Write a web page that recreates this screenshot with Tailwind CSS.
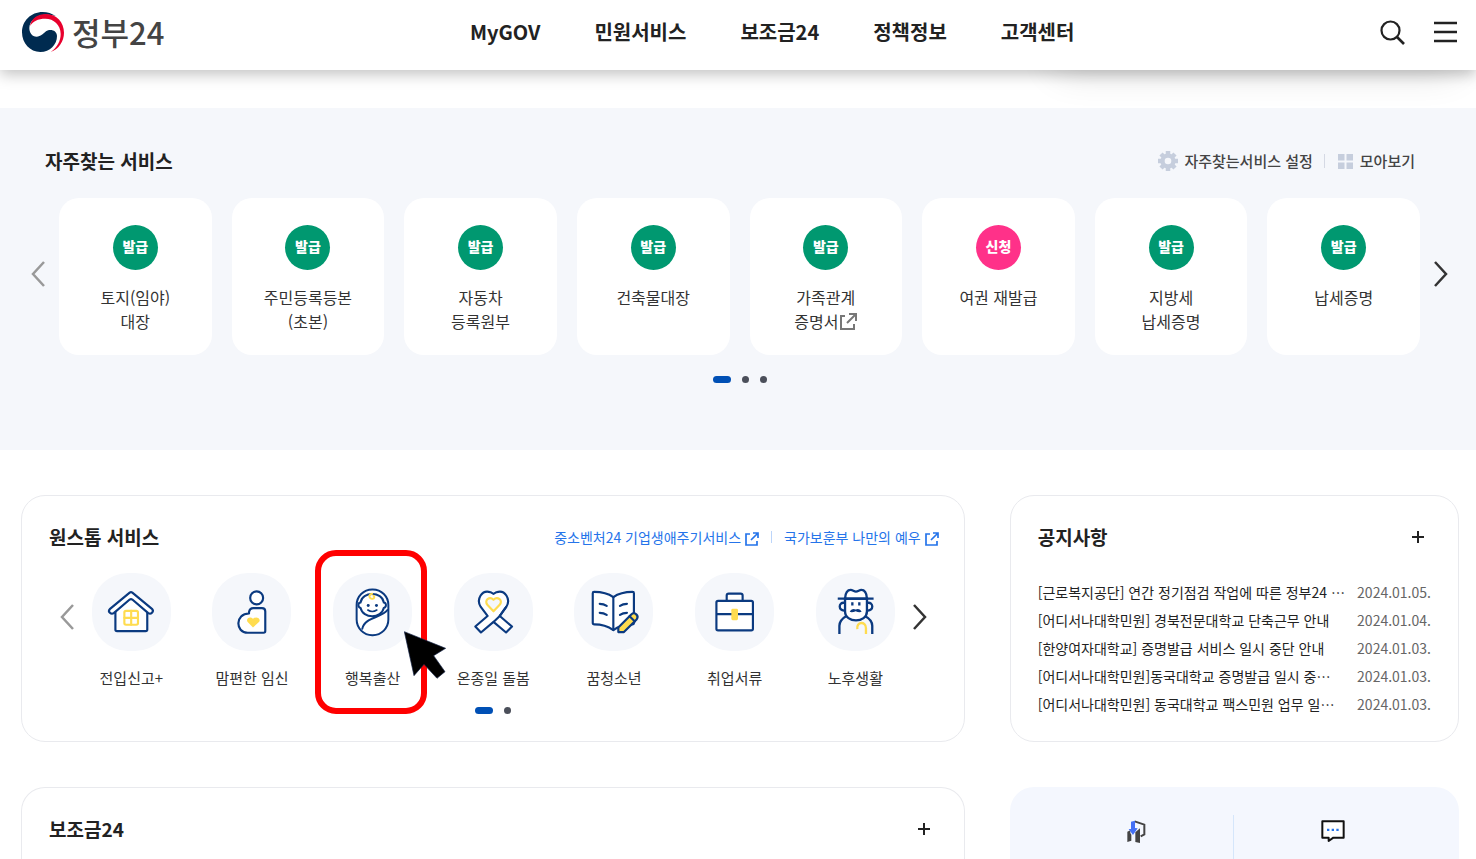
<!DOCTYPE html>
<html lang="ko">
<head>
<meta charset="utf-8">
<meta name="viewport" content="width=device-width, initial-scale=1">
<title>정부24</title>
<script src="https://cdn.jsdelivr.net/npm/@tailwindcss/browser@4"></script>
</head>
<body class="flex h-screen flex-col overflow-hidden bg-white font-['Noto_Sans_CJK_KR',sans-serif] text-[#333]">

<header class="relative z-10 flex h-[70px] shrink-0 items-center justify-between bg-white pr-[19px] pb-[6px] pl-[22px] shadow-[0_4px_14px_rgba(0,0,0,0.25)]">
  <a href="#" class="flex items-center gap-[8px]">
    <svg class="h-[40px] w-[42px]" viewBox="66 36 126 120" aria-hidden="true">
      <path fill="#002b50" d="M168 49C156 40 142 36 128 36C93 36 66 63 66 97C66 130 90 156 121 156C150 156 171 134 171 108C171 90 150 85 138 94C130 101 122 110 110 110C96 110 88 98 88 84C88 62 110 44 136 44C148 44 158 45 168 49Z"/>
      <path fill="#e8002d" d="M90 78C94 54 114 42 138 42C170 42 192 68 192 98C192 125 175 148 152 156C172 142 182 122 182 102C182 74 161 56 136 56C114 56 98 64 90 78Z"/>
    </svg>
    <span class="text-[31px] leading-[40px] font-medium text-[#444]">정부24</span>
  </a>
  <nav class="flex gap-[54px] text-[20px] leading-[28px] font-bold text-[#222]">
    <a href="#">MyGOV</a>
    <a href="#">민원서비스</a>
    <a href="#">보조금24</a>
    <a href="#">정책정보</a>
    <a href="#">고객센터</a>
  </nav>
  <div class="flex items-center gap-[29px]">
    <button aria-label="검색"><svg class="block size-[25px]" viewBox="0 0 25 25" fill="none" stroke="#222" stroke-width="2.200"><circle cx="10.500" cy="10.500" r="9"/><path d="M17 17l7 7" stroke-width="2.600"/></svg></button>
    <button aria-label="전체메뉴"><svg class="block h-[22px] w-[23px]" viewBox="0 0 23 22" stroke="#222" stroke-width="2.300"><path d="M0 2h23M0 11h23M0 20h23"/></svg></button>
  </div>
</header>

<div class="relative h-[38px] shrink-0 overflow-hidden" aria-hidden="true">
  <div class="absolute right-[14px] bottom-full h-10 w-[410px] rounded-3xl shadow-[0_4px_36px_rgba(0,0,0,0.12)]"></div>
</div>

<section class="h-[342px] shrink-0 bg-[#f5f7fb] pt-[39px]">
  <div class="flex items-center justify-between pr-[61px] pl-[45px]">
    <h2 class="text-[19px] leading-[28px] font-bold text-[#222]">자주찾는 서비스</h2>
    <div class="flex items-center text-[15px] leading-[28px] font-medium text-[#444]">
      <a href="#" class="flex items-center gap-[6px]">
        <svg class="size-5" viewBox="0 0 20 20" aria-hidden="true"><g stroke="#c6cedd" stroke-width="4.500"><path d="M10 0v20M0 10h20M3 3l14 14M17 3L3 17"/></g><circle cx="10" cy="10" r="7.600" fill="#c6cedd"/><circle cx="10" cy="10" r="3.300" fill="#f5f7fb"/></svg>
        자주찾는서비스 설정
      </a>
      <span class="mx-[11px] h-[14px] w-px bg-[#d5d9e4]"></span>
      <a href="#" class="flex items-center gap-[7px]">
        <svg class="ml-[2px] size-[15px]" viewBox="0 0 15 15" fill="#c6cedd" aria-hidden="true"><path d="M0 0h6.500v6.500H0zM8.500 0H15v6.500H8.500zM0 8.500h6.500V15H0zM8.500 8.500H15V15H8.500z"/></svg>
        모아보기
      </a>
    </div>
  </div>
  <div class="mt-[23px] flex items-center gap-[14px] pr-[28px] pl-[31px]">
    <button aria-label="이전" class="-mt-[6px]"><svg class="block h-[26px] w-[14px]" viewBox="0 0 14 26" fill="none" stroke="#999" stroke-width="2.500"><path d="M13 1L2 13l11 12"/></svg></button>
    <ul class="grid flex-1 grid-cols-8 gap-5 text-center text-[16px] leading-[24px]">
      <li><a href="#" class="flex h-[157px] flex-col items-center gap-[15px] rounded-[20px] bg-white pt-[27px]"><span class="size-[45px] rounded-full bg-[#009870] text-[14px] leading-[43px] font-black text-white">발급</span><span>토지(임야)<br>대장</span></a></li>
      <li><a href="#" class="flex h-[157px] flex-col items-center gap-[15px] rounded-[20px] bg-white pt-[27px]"><span class="size-[45px] rounded-full bg-[#009870] text-[14px] leading-[43px] font-black text-white">발급</span><span>주민등록등본<br>(초본)</span></a></li>
      <li><a href="#" class="flex h-[157px] flex-col items-center gap-[15px] rounded-[20px] bg-white pt-[27px]"><span class="size-[45px] rounded-full bg-[#009870] text-[14px] leading-[43px] font-black text-white">발급</span><span>자동차<br>등록원부</span></a></li>
      <li><a href="#" class="flex h-[157px] flex-col items-center gap-[15px] rounded-[20px] bg-white pt-[27px]"><span class="size-[45px] rounded-full bg-[#009870] text-[14px] leading-[43px] font-black text-white">발급</span><span>건축물대장</span></a></li>
      <li><a href="#" class="flex h-[157px] flex-col items-center gap-[15px] rounded-[20px] bg-white pt-[27px]"><span class="size-[45px] rounded-full bg-[#009870] text-[14px] leading-[43px] font-black text-white">발급</span><span>가족관계<br><span class="flex items-center justify-center gap-[2px]">증명서<svg class="size-[17px]" viewBox="0 0 17 17" fill="none" stroke="#777" stroke-width="2" aria-hidden="true"><path d="M5 3H1v13h13v-5M9 1h7v7M16 1L7 10"/></svg></span></span></a></li>
      <li><a href="#" class="flex h-[157px] flex-col items-center gap-[15px] rounded-[20px] bg-white pt-[27px]"><span class="size-[45px] rounded-full bg-[#ff3189] text-[14px] leading-[43px] font-black text-white">신청</span><span>여권 재발급</span></a></li>
      <li><a href="#" class="flex h-[157px] flex-col items-center gap-[15px] rounded-[20px] bg-white pt-[27px]"><span class="size-[45px] rounded-full bg-[#009870] text-[14px] leading-[43px] font-black text-white">발급</span><span>지방세<br>납세증명</span></a></li>
      <li><a href="#" class="flex h-[157px] flex-col items-center gap-[15px] rounded-[20px] bg-white pt-[27px]"><span class="size-[45px] rounded-full bg-[#009870] text-[14px] leading-[43px] font-black text-white">발급</span><span>납세증명</span></a></li>
    </ul>
    <button aria-label="다음" class="-mt-[6px]"><svg class="block h-[26px] w-[14px]" viewBox="0 0 14 26" fill="none" stroke="#333" stroke-width="2.500"><path d="M1 1l11 12L1 25"/></svg></button>
  </div>
  <div class="mt-[21px] flex items-center justify-center gap-[11px] pl-1">
    <button aria-label="1" class="h-[7px] w-[18px] rounded-full bg-[#0050b5]"></button>
    <button aria-label="2" class="size-[7px] rounded-full bg-[#4b4f5a]"></button>
    <button aria-label="3" class="size-[7px] rounded-full bg-[#4b4f5a]"></button>
  </div>
</section>

<main class="grid flex-1 grid-cols-[943fr_449fr] grid-rows-[247px_1fr] gap-[45px] pt-[45px] pr-[17px] pl-[21px]">
  <section class="rounded-[24px] border border-[#e9eaee] pt-[27px]">
    <div class="flex items-center justify-between pr-[25px] pl-[27px]">
      <h2 class="text-[19px] leading-[28px] font-bold text-[#222]">원스톱 서비스</h2>
      <div class="flex items-center gap-[12px] text-[14px] leading-[28px] text-[#2574ea]">
        <a href="#" class="flex items-center gap-[4px]">중소벤처24 기업생애주기서비스<svg class="mt-[3px] size-[14px]" viewBox="0 0 14 14" fill="none" stroke="#2574ea" stroke-width="1.700" aria-hidden="true"><path d="M5 2H1v11h11V9M8 1h5v5M13 1L6 8"/></svg></a>
        <span class="h-3 w-px bg-[#bcd5fa]"></span>
        <a href="#" class="flex items-center gap-[4px]">국가보훈부 나만의 예우<svg class="mt-[3px] size-[14px]" viewBox="0 0 14 14" fill="none" stroke="#2574ea" stroke-width="1.700" aria-hidden="true"><path d="M5 2H1v11h11V9M8 1h5v5M13 1L6 8"/></svg></a>
      </div>
    </div>
    <div class="mt-[22px] flex items-start pr-[37px] pl-[38px]">
      <button aria-label="이전" class="mt-[31px]"><svg class="block h-[26px] w-[14px]" viewBox="0 0 14 26" fill="none" stroke="#999" stroke-width="2.500"><path d="M13 1L2 13l11 12"/></svg></button>
      <ul class="-mx-[3px] grid flex-1 grid-cols-7 text-center text-[15px] leading-[22px]">
        <li><a href="#" class="flex flex-col items-center gap-4">
          <svg class="h-[78px] w-[79px] rounded-[36px] bg-[#f5f7fb]" viewBox="36 41 237 235" fill="none" stroke="#0b3a80" stroke-width="6.500" stroke-linejoin="round" stroke-linecap="round" aria-hidden="true"><path fill="#fff" d="M106 152V211q0 5 5 5h86q5 0 5-5V152L153 114Z"/><path fill="#fff" d="M89 150L149 100q4-3 8 0L217 150c6 8-4 17-12 12L157 121q-4-3-8 0L101 162c-8 5-19-4-12-12Z"/><g stroke="#ffdc4f"><rect x="133" y="155" width="41" height="42" rx="5"/><path d="M153.500 155v42M133 176h41"/></g></svg>
          전입신고+</a></li>
        <li><a href="#" class="flex flex-col items-center gap-4">
          <svg class="h-[78px] w-[79px] rounded-[36px] bg-[#f5f7fb]" viewBox="398 41 237 235" fill="none" stroke="#0b3a80" stroke-width="6.500" stroke-linejoin="round" aria-hidden="true"><circle cx="532" cy="116" r="19.500" fill="#fff"/><path fill="#fff" d="M509 163V159q2-12 13-12h26q10 0 10 10v59q0 5-5 5h-48c-38 0-38-58 4-58Z"/><path fill="#ffdc4f" stroke="none" d="M521 205l-16-16c-7-9 6-20 16-10c10-10 26 1 18 10Z"/></svg>
          맘편한 임신</a></li>
        <li class="relative"><a href="#" class="flex flex-col items-center gap-4">
          <svg class="h-[78px] w-[79px] rounded-[36px] bg-[#f5f7fb]" viewBox="100 101 236 236" fill="none" stroke="#0b3a80" stroke-width="6" stroke-linecap="round" aria-hidden="true"><rect x="170" y="151" width="96" height="138" rx="47" fill="#fff"/><path fill="#fff" d="M182 190C186 156 248 156 252 190c9 1 9 15 0 17C245 240 189 240 182 207c-9-2-9-16 0-17Z"/><path d="M263 213C248 236 194 234 187 270"/><g fill="#0b3a80" stroke="none"><circle cx="205" cy="199" r="4.500"/><circle cx="230" cy="199" r="4.500"/></g><path d="M204 213q13 9 27 0" stroke-width="5"/><path stroke="#ffdc4f" d="M217 164c-13 1-9 17 1 15c6-1 7-7 3-9"/></svg>
          행복출산</a>
          <span class="pointer-events-none absolute top-[-23px] right-[6px] left-[3px] h-[164px] rounded-[21px] border-6 border-[#f00]"></span>
          <svg class="pointer-events-none absolute top-[58px] left-[92px] z-10 h-[48px] w-[43px]" viewBox="312 275 129 144" aria-hidden="true"><path d="M313 277L437 327L401 349L435 397L411 417L372 375L342 409Z" fill="#000" stroke="#16264a" stroke-width="2"/></svg>
        </li>
        <li><a href="#" class="flex flex-col items-center gap-4">
          <svg class="h-[78px] w-[79px] rounded-[36px] bg-[#f5f7fb]" viewBox="461 101 236 236" fill="none" stroke="#0b3a80" stroke-width="6.500" stroke-linejoin="round" aria-hidden="true"><path fill="#fff" d="M618 203C632 180 614 150 588 159L579 164L570 159C544 150 526 180 540 203L561 231L524 263L541 281L579 249L617 281L635 263L598 231Z"/><path d="M579 249L598 231L618 203"/><path stroke="#ffdc4f" fill="#f5f7fb" d="M579 217L561 198c-12-14 6-28 18-16c12-12 31 2 18 16Z"/></svg>
          온종일 돌봄</a></li>
        <li><a href="#" class="flex flex-col items-center gap-4">
          <svg class="h-[78px] w-[79px] rounded-[36px] bg-[#f5f7fb]" viewBox="42 41 237 235" fill="none" stroke="#0b3a80" stroke-width="6.500" stroke-linejoin="round" stroke-linecap="round" aria-hidden="true"><path fill="#fff" d="M160 114C145 103 126 98 102 98q-4 0-4 4v89q0 5 5 5c24 0 41 6 57 17c15-11 36-16 57-17q5 0 5-5V102q0-4-4-4c-24 0-43 5-58 16Z"/><path d="M160 114v98"/><path d="M119 134q12 0 21 6M119 161q12 0 21 6M201 134q-12 0-21 6M201 161q-12 0-21 6"/><path fill="#ffdc4f" d="M175 205L214 166c10-10 25 4 16 15L192 219H175Z"/><path d="M209 171l16 16"/></svg>
          꿈청소년</a></li>
        <li><a href="#" class="flex flex-col items-center gap-4">
          <svg class="h-[78px] w-[79px] rounded-[36px] bg-[#f5f7fb]" viewBox="404 41 237 235" fill="none" stroke="#0b3a80" stroke-width="6.500" stroke-linejoin="round" aria-hidden="true"><path fill="#fff" d="M499 124V109q0-6 6-6h36q6 0 6 6v15"/><rect x="468" y="125" width="110" height="89" rx="5" fill="#fff"/><path d="M468 165h110"/><rect x="513" y="149" width="20" height="34" rx="4" fill="#ffdc4f" stroke="none"/></svg>
          취업서류</a></li>
        <li><a href="#" class="flex flex-col items-center gap-4">
          <svg class="h-[78px] w-[79px] rounded-[36px] bg-[#f5f7fb]" viewBox="75 41 235 235" fill="none" stroke="#0b3a80" stroke-width="7" aria-hidden="true"><path d="M144 225V200c0-14 8-22 20-29M222 171c13 7 21 15 21 29v25"/><path fill="#fff" d="M160 131c-20-4-20 25 0 23M228 131c20-4 20 25 0 23"/><path fill="#fff" d="M161 118v38c0 37 66 37 66 0V118Z"/><path fill="#fff" d="M161 118c1-16 6-26 17-26c6 0 10 5 16 5s10-5 16-5c11 0 16 10 17 26Z"/><path d="M139 118h108"/><path d="M183 129v10M204 129v10"/><path fill="#0b3a80" stroke="none" d="M175 158c3-8 12-11 18-7c7-4 15-1 18 7c-5 2-12 1-18-2c-6 3-13 4-18 2Z"/><path stroke="#ffdc4f" d="M198 210c-4-23 26-25 26-3v18"/></svg>
          노후생활</a></li>
      </ul>
      <button aria-label="다음" class="mt-[31px]"><svg class="block h-[26px] w-[14px]" viewBox="0 0 14 26" fill="none" stroke="#333" stroke-width="2.500"><path d="M1 1l11 12L1 25"/></svg></button>
    </div>
    <div class="mt-[18px] flex items-center justify-center gap-[11px]">
      <button aria-label="1" class="h-[7px] w-[18px] rounded-full bg-[#0050b5]"></button>
      <button aria-label="2" class="size-[7px] rounded-full bg-[#4b4f5a]"></button>
    </div>
  </section>

  <section class="rounded-[24px] border border-[#e9eaee] px-[27px] pt-[27px]">
    <div class="flex items-center justify-between pr-[7px]">
      <h2 class="text-[19px] leading-[28px] font-bold text-[#222]">공지사항</h2>
      <button aria-label="공지사항 더보기"><svg class="block size-3" viewBox="0 0 12 12" stroke="#222" stroke-width="2"><path d="M6 0v12M0 6h12"/></svg></button>
    </div>
    <ul class="mt-[27px] text-[14px] leading-[28px] text-[#222]">
      <li class="flex justify-between"><a href="#">[근로복지공단] 연간 정기점검 작업에 따른 정부24 …</a><time class="text-[#666]">2024.01.05.</time></li>
      <li class="flex justify-between"><a href="#">[어디서나대학민원] 경북전문대학교 단축근무 안내</a><time class="text-[#666]">2024.01.04.</time></li>
      <li class="flex justify-between"><a href="#">[한양여자대학교] 증명발급 서비스 일시 중단 안내</a><time class="text-[#666]">2024.01.03.</time></li>
      <li class="flex justify-between"><a href="#">[어디서나대학민원]동국대학교 증명발급 일시 중…</a><time class="text-[#666]">2024.01.03.</time></li>
      <li class="flex justify-between"><a href="#">[어디서나대학민원] 동국대학교 팩스민원 업무 일…</a><time class="text-[#666]">2024.01.03.</time></li>
    </ul>
  </section>

  <section class="rounded-t-[24px] border border-b-0 border-[#e9eaee] pt-[27px]">
    <div class="flex items-center justify-between pr-[34px] pl-[27px]">
      <h2 class="text-[19px] leading-[28px] font-bold text-[#222]">보조금24</h2>
      <button aria-label="보조금24 더보기"><svg class="block size-3" viewBox="0 0 12 12" stroke="#222" stroke-width="2"><path d="M6 0v12M0 6h12"/></svg></button>
    </div>
  </section>

  <section class="grid grid-cols-2 rounded-t-[24px] bg-[#f4f7fe] pt-[28px]">
    <a href="#" aria-label="서비스 바로가기" class="flex justify-center border-r border-[#d5e6fb] pt-[5px] pl-[29px]">
      <svg class="h-[23px] w-[19px]" viewBox="380 151 57 69" aria-hidden="true"><path fill="none" stroke="#444" stroke-width="6" d="M403 155L432 165V194L421 200"/><path fill="#444" d="M381 186l9-4v8l3 5v18l-12 4ZM405 188l14-12v44l-14-3Z"/><path fill="#4470f5" d="M392 156l12-3v22l8 1L398 196L385 178h7Z"/></svg>
    </a>
    <a href="#" aria-label="상담" class="flex justify-center pt-[5px] pr-[27px]">
      <svg class="h-[23px] w-[24px]" viewBox="964 151 70 69" aria-hidden="true"><path fill="#fff" stroke="#111" stroke-width="6" stroke-linejoin="round" d="M967 155H1031V204H1000L986 214V204H967Z"/><path fill="#2574ea" d="M981 177h7v7h-7zM995 177h7v7h-7zM1009 177h7v7h-7z"/></svg>
    </a>
  </section>
</main>
</body>
</html>
